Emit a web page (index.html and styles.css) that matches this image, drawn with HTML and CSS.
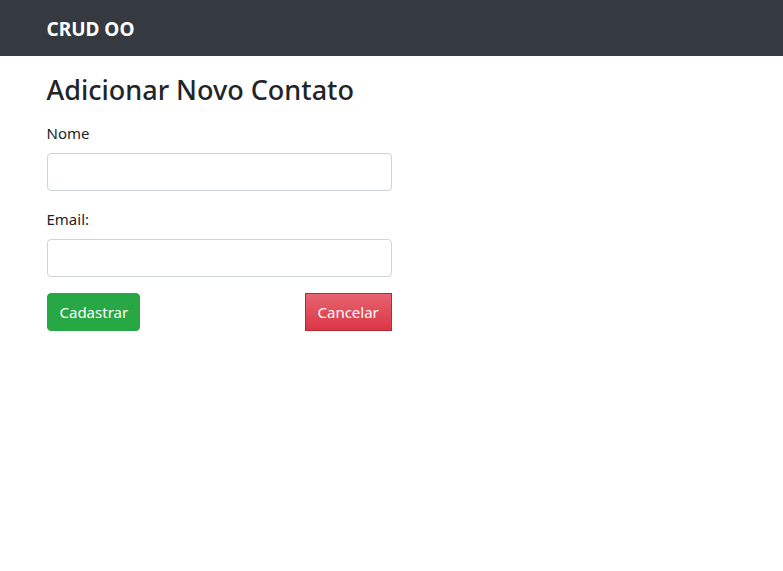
FILE: index.html
```html
<!DOCTYPE html>
<html lang="pt">
<head>
<meta charset="utf-8">
<title>CRUD OO</title>
<link rel="stylesheet" href="styles.css">
</head>
<body>
<nav class="navbar">
  <div class="container">
    <a class="brand" href="#">CRUD OO</a>
  </div>
</nav>
<main class="container">
  <h2 class="title">Adicionar Novo Contato</h2>
  <form class="form">
    <div class="group">
      <label class="label" for="nome">Nome</label>
      <input class="input" id="nome" type="text">
    </div>
    <div class="group">
      <label class="label" for="email">Email:</label>
      <input class="input" id="email" type="email">
    </div>
    <div class="actions">
      <button class="btn btn-success" type="button">Cadastrar</button>
      <button class="btn btn-cancel" type="button">Cancelar</button>
    </div>
  </form>
</main>
</body>
</html>
```

FILE: styles.css
```css
* { box-sizing: border-box; }
html, body { margin: 0; padding: 0; }
body {
  font-family: "Noto Sans", "Open Sans", sans-serif;
  font-size: 16px;
  line-height: 1.5;
  color: #212529;
  background: #fff;
}
.container {
  width: 720px;
  margin: 0 auto;
  padding: 0 15px;
}
.navbar {
  background: #343a40;
  height: 56px;
  display: flex;
  align-items: center;
  padding-top: 3px;
}
.brand {
  color: #fff;
  text-decoration: none;
  font-size: 19px;
  font-weight: 700;
  line-height: 1;
}
.title {
  margin: 18px 0 15px;
  font-size: 27px;
  font-weight: 500;
  line-height: 1.2;
}
.form { width: 345px; }
.group { margin-bottom: 16px; }
.label {
  display: block;
  margin-bottom: 8px;
  font-size: 15px;
  line-height: 24px;
}
.input {
  display: block;
  width: 100%;
  height: 38px;
  border: 1px solid #ced4da;
  border-radius: 4px;
  background: #fff;
  font: inherit;
  padding: 6px 12px;
}
.actions {
  display: flex;
  justify-content: space-between;
}
.btn {
  height: 38px;
  padding: 0 12px;
  font-family: inherit;
  font-size: 15px;
  color: #fff;
  cursor: pointer;
}
.btn-success {
  background: #28a745;
  border: 1px solid #28a745;
  border-radius: 4px;
  width: 93px;
}
.btn-cancel {
  background: linear-gradient(#e66470, #dc3545);
  border: 1px solid #b52a38;
  border-radius: 0;
  width: 87px;
}
```
